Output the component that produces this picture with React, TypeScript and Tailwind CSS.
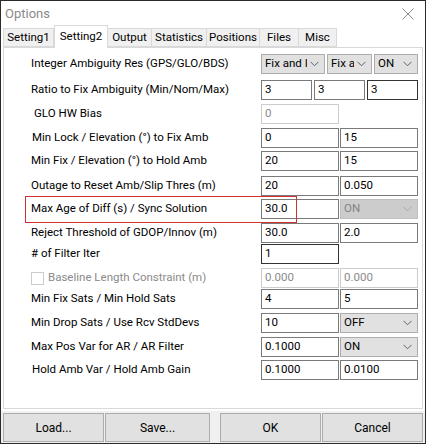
import React from "react";

const FONT = { fontFamily: 'Roboto, "Liberation Sans", Arial, sans-serif' };

function Input({ value, w, disabled, dark }: { value: string; w: string; disabled?: boolean; dark?: boolean }) {
  return (
    <div
      className={`${w} h-full flex items-center pl-[3px] bg-white border ${
        disabled ? "border-[#cccccc] text-[#8a8a8a]" : dark ? "border-[#333333] text-black" : "border-[#7a7a7a] text-black"
      }`}
    >
      {value}
    </div>
  );
}

function Select({ value, w, disabled }: { value: string; w: string; disabled?: boolean }) {
  return (
    <div
      className={`${w} h-full flex items-center pl-[3px] pr-[5px] border ${
        disabled ? "bg-[#cccccc] border-[#bfbfbf] text-[#838383]" : "bg-[#e1e1e1] border-[#adadad] text-black"
      }`}
    >
      <span className="flex-1 overflow-hidden whitespace-nowrap">{value}</span>
      <svg width="9" height="6" viewBox="0 0 9 6" className="ml-[3px] shrink-0">
        <path d="M0.5 0.8 L4.5 4.8 L8.5 0.8" fill="none" stroke={disabled ? "#a8a8a8" : "#606060"} strokeWidth="1" />
      </svg>
    </div>
  );
}

function Row({ mt, label, labelPl = "pl-[27px]", children, labelClass = "" }: { mt: string; label: React.ReactNode; labelPl?: string; children?: React.ReactNode; labelClass?: string }) {
  return (
    <div className={`${mt} h-[20px] flex items-center`}>
      <div className={`w-[257px] ${labelPl} whitespace-nowrap ${labelClass}`}>{label}</div>
      <div className="flex h-full">{children}</div>
    </div>
  );
}

const tabs = ["Setting1", "Setting2", "Output", "Statistics", "Positions", "Files", "Misc"];
const tabW = ["w-[51px]", "w-[54px]", "w-[44px]", "w-[55px]", "w-[53px]", "w-[39px]", "w-[38px]"];

export default function App() {
  return (
    <div className="w-[426px] h-[444px] bg-[#f0f0f0] border border-[#2b2b2b] flex flex-col text-[11.5px] text-black overflow-hidden" style={FONT}>
      {/* title bar */}
      <div className="h-[25px] bg-white flex items-center justify-between pl-[4px] pr-[11px] shrink-0">
        <span className="text-[13px] text-[#8a8a8a]">Options</span>
        <svg width="12" height="12" viewBox="0 0 12 12">
          <path d="M0.5 0.5 L11.5 11.5 M11.5 0.5 L0.5 11.5" stroke="#8a8a8a" strokeWidth="1" />
        </svg>
      </div>
      {/* tabs */}
      <div className="h-[21px] flex items-end pl-[2px] shrink-0 bg-white">
        {tabs.map((t, i) =>
          i === 1 ? (
            <div key={t} className={`${tabW[i]} h-[23px] -mb-[1px] bg-white border border-[#d9d9d9] border-b-0 flex items-start justify-center pt-[2px] z-10 relative`}>
              {t}
            </div>
          ) : (
            <div key={t} className={`${tabW[i]} h-[19px] bg-[#f0f0f0] border border-[#d9d9d9] ${i === 0 ? "" : "border-l-0"} flex items-center justify-center`}>
              {t}
            </div>
          )
        )}
      </div>
      {/* panel */}
      <div className="bg-white px-[2px] pb-[2px] shrink-0">
        <div className="relative h-[362px] bg-white border border-[#d9d9d9] flex flex-col">
          <div className="absolute left-[21px] top-[148px] w-[272px] h-[27px] border border-[#d03030]" />
          <Row mt="mt-[6px]" label="Integer Ambiguity Res (GPS/GLO/BDS)">
            <Select value="Fix and Inst" w="w-[64px]" />
            <div className="w-[2px]" />
            <Select value="Fix and Hold" w="w-[45px]" />
            <div className="w-[2px]" />
            <Select value="ON" w="w-[44px]" />
          </Row>
          <Row mt="mt-[6px]" label="Ratio to Fix Ambiguity (Min/Nom/Max)">
            <Input value="3" w="w-[51px]" />
            <div className="w-[2px]" />
            <Input value="3" w="w-[51px]" />
            <div className="w-[2px]" />
            <Input value="3" w="w-[51px]" dark />
          </Row>
          <Row mt="mt-[4px]" label="GLO HW Bias" labelPl="pl-[30px]">
            <Input value="0" w="w-[78px]" disabled />
          </Row>
          <Row mt="mt-[4px]" label="Min Lock / Elevation (°) to Fix Amb" labelPl="pl-[28px]">
            <Input value="0" w="w-[78px]" />
            <div className="w-[1px]" />
            <Input value="15" w="w-[78px]" />
          </Row>
          <Row mt="mt-[3px]" label="Min Fix / Elevation (°) to Hold Amb">
            <Input value="20" w="w-[78px]" />
            <div className="w-[1px]" />
            <Input value="15" w="w-[78px]" />
          </Row>
          <Row mt="mt-[5px]" label="Outage to Reset Amb/Slip Thres (m)">
            <Input value="20" w="w-[78px]" />
            <div className="w-[1px]" />
            <Input value="0.050" w="w-[78px]" />
          </Row>
          <Row mt="mt-[3px]" label="Max Age of Diff (s) / Sync Solution">
            <Input value="30.0" w="w-[78px]" />
            <div className="w-[1px]" />
            <Select value="ON" w="w-[78px]" disabled />
          </Row>
          <Row mt="mt-[4px]" label="Reject Threshold of GDOP/Innov (m)">
            <Input value="30.0" w="w-[78px]" />
            <div className="w-[1px]" />
            <Input value="2.0" w="w-[78px]" />
          </Row>
          <Row mt="mt-[1px]" label="# of Filter Iter">
            <Input value="1" w="w-[78px]" dark />
          </Row>
          <Row
            mt="mt-[4px]"
            labelPl="pl-[27px]"
            label={
              <span className="flex items-center text-[#8a8a8a]">
                <span className="w-[13px] h-[13px] border border-[#cccccc] bg-white mr-[4px]" />
                Baseline Length Constraint (m)
              </span>
            }
          >
            <Input value="0.000" w="w-[78px]" disabled />
            <div className="w-[1px]" />
            <Input value="0.000" w="w-[78px]" disabled />
          </Row>
          <Row mt="mt-[1px]" label="Min Fix Sats / Min Hold Sats">
            <Input value="4" w="w-[78px]" />
            <div className="w-[1px]" />
            <Input value="5" w="w-[78px]" />
          </Row>
          <Row mt="mt-[4px]" label="Min Drop Sats / Use Rcv StdDevs">
            <Input value="10" w="w-[78px]" />
            <div className="w-[1px]" />
            <Select value="OFF" w="w-[78px]" />
          </Row>
          <Row mt="mt-[4px]" label="Max Pos Var for AR / AR Filter">
            <Input value="0.1000" w="w-[78px]" />
            <div className="w-[1px]" />
            <Select value="ON" w="w-[78px]" />
          </Row>
          <Row mt="mt-[3px]" label="Hold Amb Var / Hold Amb Gain" labelPl="pl-[28px]">
            <Input value="0.1000" w="w-[78px]" />
            <div className="w-[1px]" />
            <Input value="0.0100" w="w-[78px]" />
          </Row>
        </div>
      </div>
      {/* buttons */}
      <div className="flex-1 flex items-end pl-[2px] pr-[2px] pb-[1px]">
        <div className="flex w-full h-[29px] text-[12px]">
          <button className="w-[101px] h-full bg-[#e1e1e1] border border-[#adadad]">Load...</button>
          <div className="w-[1px]" />
          <button className="w-[105px] h-full bg-[#e1e1e1] border border-[#adadad]">Save...</button>
          <div className="w-[10px]" />
          <button className="w-[101px] h-full bg-[#e1e1e1] border border-[#adadad]">OK</button>
          <div className="w-[1px]" />
          <button className="flex-1 h-full bg-[#e1e1e1] border border-[#adadad]">Cancel</button>
        </div>
      </div>
    </div>
  );
}
